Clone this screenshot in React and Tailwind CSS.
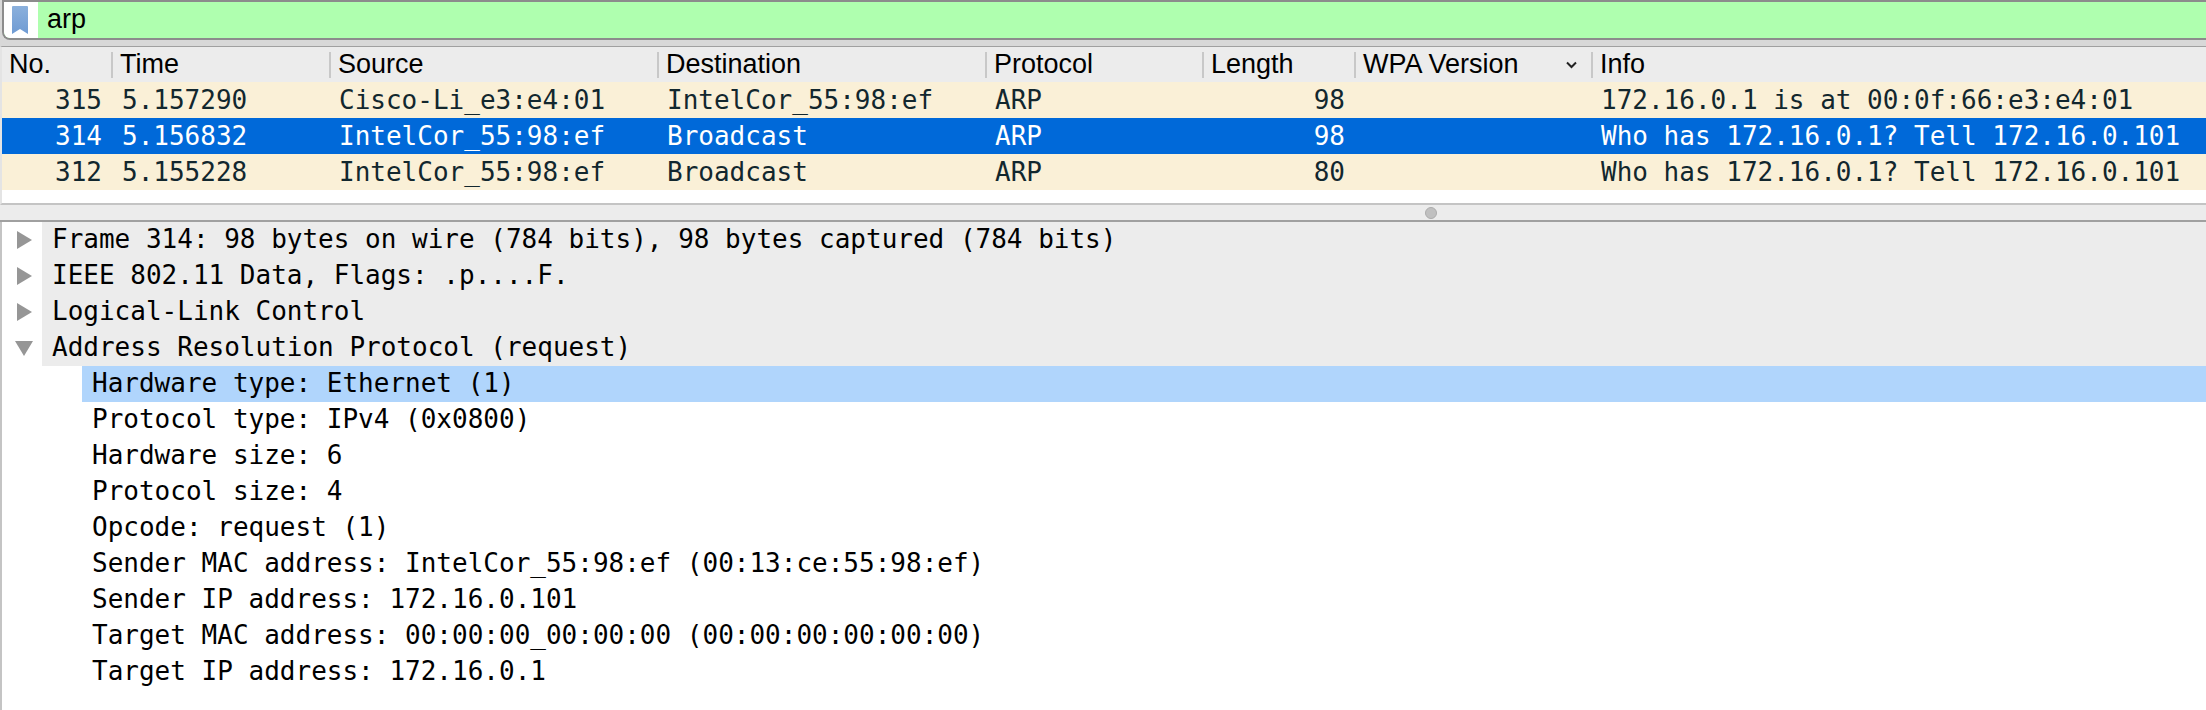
const mono = "font-['DejaVu_Sans_Mono','Liberation_Mono',monospace]";
const sans = "font-['Liberation_Sans',Arial,sans-serif]";
const cols = "grid grid-cols-[109px_218px_328px_328px_217px_152px_237px_1fr]";

const headers = ["No.", "Time", "Source", "Destination", "Protocol", "Length", "WPA Version", "Info"];
const rows = [
  { no: "315", time: "5.157290", src: "Cisco-Li_e3:e4:01", dst: "IntelCor_55:98:ef", proto: "ARP", len: "98", info: "172.16.0.1 is at 00:0f:66:e3:e4:01", ipl: "pl-[10px]" },
  { no: "314", time: "5.156832", src: "IntelCor_55:98:ef", dst: "Broadcast", proto: "ARP", len: "98", info: "Who has 172.16.0.1? Tell 172.16.0.101", sel: true, ipl: "pl-[10px]" },
  { no: "312", time: "5.155228", src: "IntelCor_55:98:ef", dst: "Broadcast", proto: "ARP", len: "80", info: "Who has 172.16.0.1? Tell 172.16.0.101", ipl: "pl-[10px]" },
];
const sections = [
  ["Frame 314: 98 bytes on wire (784 bits), 98 bytes captured (784 bits)", false],
  ["IEEE 802.11 Data, Flags: .p....F.", false],
  ["Logical-Link Control", false],
  ["Address Resolution Protocol (request)", true],
];
const fields = [
  "Hardware type: Ethernet (1)",
  "Protocol type: IPv4 (0x0800)",
  "Hardware size: 6",
  "Protocol size: 4",
  "Opcode: request (1)",
  "Sender MAC address: IntelCor_55:98:ef (00:13:ce:55:98:ef)",
  "Sender IP address: 172.16.0.101",
  "Target MAC address: 00:00:00_00:00:00 (00:00:00:00:00:00)",
  "Target IP address: 172.16.0.1",
];

function Arrow({ open }) {
  return (
    <svg width="18" height="18" viewBox="0 0 18 18" className="block">
      {open ? <path d="M0 2H18L9 17Z" fill="#969696" /> : <path d="M2 0L17 9L2 18Z" fill="#969696" />}
    </svg>
  );
}

export default function App() {
  return (
    <div className={`w-[2206px] h-[710px] bg-white overflow-hidden flex flex-col ${sans}`}>
      <div className="h-[46px] bg-[#d8d8d8] shrink-0">
        <div className="h-[40px] flex border-y-2 border-[#8c8c8c] border-l-2 rounded-bl-[8px] ml-[2px] overflow-hidden bg-[#afffaf]">
          <div className="w-[34px] bg-white flex items-center pl-[8px] shrink-0">
            <svg width="16" height="28" viewBox="0 0 16 28" className="block">
              <defs>
                <linearGradient id="bm" x1="0" y1="0" x2="0" y2="1">
                  <stop offset="0" stopColor="#8bb0dc" />
                  <stop offset="1" stopColor="#6f9bd3" />
                </linearGradient>
              </defs>
              <path d="M1 0H15Q16 0 16 1V28L8 23L0 28V1Q0 0 1 0Z" fill="url(#bm)" />
            </svg>
          </div>
          <div className="pl-[9px] text-[27px] leading-[34px] text-black">arp</div>
        </div>
      </div>

      <div className="h-[159px] shrink-0 border-t border-[#a0a0a0] border-b-2 border-b-[#c4c4c4] border-l-2 border-l-[#e4e4e4] flex flex-col">
        <div className={`${cols} h-[35px] bg-[#ececec] text-[27px] text-black shrink-0 items-center`}>
          {headers.map((h, i) => (
            <div key={h} className={`h-[26px] flex items-center justify-between leading-none pl-[7px] pr-[12px] ${i > 0 ? "border-l-2 border-[#c8c8c8]" : ""}`}>
              <span>{h}</span>
              {h === "WPA Version" && (
                <svg width="11" height="8" viewBox="0 0 11 8" className="block mr-[2px]">
                  <path d="M1 1.5L5.5 6L10 1.5" fill="none" stroke="#222" strokeWidth="2" />
                </svg>
              )}
            </div>
          ))}
        </div>
        {rows.map((r) => (
          <div key={r.no} className={`${cols} h-[36px] items-center text-[26px] leading-[36px] whitespace-pre ${mono} ${r.sel ? "bg-[#0069d9] text-white" : "bg-[#faf0d7] text-[#12272e]"}`}>
            <div className="text-right pr-[9px]">{r.no}</div>
            <div className="pl-[11px]">{r.time}</div>
            <div className="pl-[10px]">{r.src}</div>
            <div className="pl-[10px]">{r.dst}</div>
            <div className="pl-[10px]">{r.proto}</div>
            <div className="text-right pr-[9px]">{r.len}</div>
            <div></div>
            <div className={r.ipl}>{r.info}</div>
          </div>
        ))}
      </div>

      <div className="h-[17px] shrink-0 bg-[#ececec] border-b-2 border-[#a0a0a0] flex items-center">
        <div className="ml-[1425px] w-[12px] h-[12px] rounded-full bg-[#c0c0c0] border border-[#acacac]"></div>
      </div>

      <div className={`flex-1 flex flex-col text-[26px] leading-[34px] text-black whitespace-pre border-l-2 border-[#c4c4c4] ${mono}`}>
        {sections.map(([t, open]) => (
          <div key={t} className="flex h-[36px]">
            <div className="w-[40px] shrink-0 flex items-center pl-[13px]">
              <Arrow open={open} />
            </div>
            <div className="flex-1 bg-[#ececec] pl-[10px]">{t}</div>
          </div>
        ))}
        {fields.map((f, i) => (
          <div key={f} className={`h-[36px] ml-[80px] pl-[10px] ${i === 0 ? "bg-[#b0d5fc]" : ""}`}>{f}</div>
        ))}
      </div>
    </div>
  );
}
